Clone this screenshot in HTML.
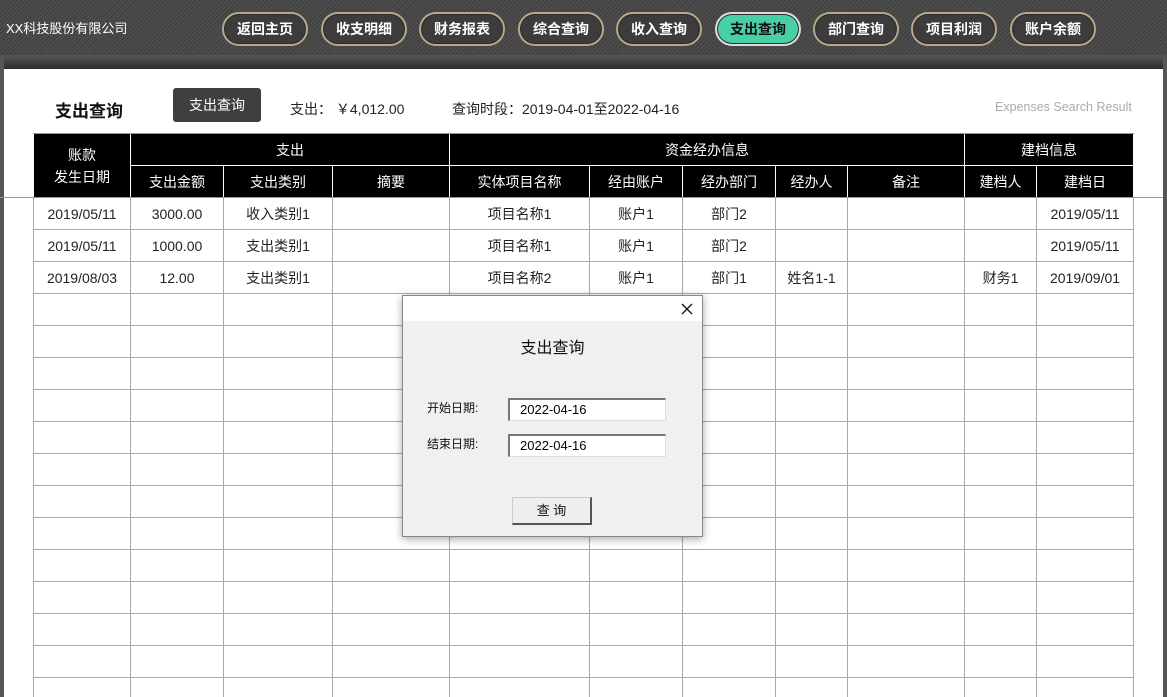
<!DOCTYPE html>
<html style="overflow:hidden;height:697px"><head><meta charset="utf-8"><style>
*{margin:0;padding:0;box-sizing:border-box}
body{width:1167px;height:697px;overflow:hidden;position:relative;background:#fff;font-family:"Liberation Sans","Noto Sans CJK SC",sans-serif;}
#hdr{position:absolute;left:0;top:0;width:1167px;height:55px;background:#454545;background-image:repeating-linear-gradient(135deg,#3d3d3d 0 1px,#4d4d4d 1px 3px);}
#band{position:absolute;left:0;top:55px;width:1167px;height:14px;background:linear-gradient(#555,#2e2e2e);}
#lb{position:absolute;left:0;top:55px;width:4px;height:642px;background:#555}
#rb{position:absolute;left:1163px;top:55px;width:4px;height:642px;background:#555}
.logo{position:absolute;left:6px;top:18px;color:#fff;font-size:13px}
.nb{position:absolute;top:12px;width:86px;height:34px;border-radius:17px;background:#3c3c3c;border:2px solid #b8a888;color:#fff;font-size:14px;font-weight:bold;text-align:center;line-height:30px;box-shadow:inset 0 0 0 1px #2a2a2a}
.nb.act{background:#48cfa6;color:#111;border-color:#ddd}
.t{position:absolute;font-size:14px;color:#222}
#wrap{position:absolute;left:0;top:0;width:1167px;height:697px;overflow:hidden}
table{position:absolute;left:33px;top:133px;border-collapse:collapse;table-layout:fixed;width:1100px}
td,th{height:32px;text-align:center;font-size:14px;color:#222;font-weight:normal;border:1px solid #aaa;padding:0}
th{background:#000;color:#fff;border:1px solid #fff}
.gl{position:absolute;height:1px;background:#2ecc8f;z-index:2}
#dlg{position:absolute;left:402px;top:295px;width:301px;height:242px;background:#f0f0f0;border:1px solid #888;box-shadow:0 2px 8px rgba(0,0,0,.35);z-index:3}
#dlg .tb{height:25px;background:#fff}
.in{position:absolute;left:105px;width:158px;height:23px;background:#fff;border:1px solid #ddd;border-top:2px solid #777;border-left:2px solid #777;font-size:13px;padding-left:10px;line-height:20px;color:#000}
</style></head><body><div id="wrap">
<div id="hdr"></div>
<div class="logo">XX科技股份有限公司</div>
<div class="nb" style="left:222px">返回主页</div>
<div class="nb" style="left:321px">收支明细</div>
<div class="nb" style="left:419px">财务报表</div>
<div class="nb" style="left:518px">综合查询</div>
<div class="nb" style="left:616px">收入查询</div>
<div class="nb act" style="left:715px">支出查询</div>
<div class="nb" style="left:813px">部门查询</div>
<div class="nb" style="left:911px">项目利润</div>
<div class="nb" style="left:1010px">账户余额</div>
<div id="band"></div><div id="lb"></div><div id="rb"></div>
<div class="t" style="left:55px;top:97px;font-size:17px;font-weight:bold;color:#111">支出查询</div>
<div style="position:absolute;left:173px;top:88px;width:88px;height:34px;background:#3f3f3f;border-radius:3px;color:#fff;font-size:14px;text-align:center;line-height:34px">支出查询</div>
<div class="t" style="left:290px;top:99px">支出：&nbsp;￥4,012.00</div>
<div class="t" style="left:452px;top:99px">查询时段：2019-04-01至2022-04-16</div>
<div class="t" style="left:995px;top:100px;color:#aaa;font-size:12.5px">Expenses Search Result</div>
<table>
<colgroup><col style="width:97px"><col style="width:93px"><col style="width:109px"><col style="width:117px"><col style="width:140px"><col style="width:93px"><col style="width:93px"><col style="width:72px"><col style="width:117px"><col style="width:72px"><col style="width:97px"></colgroup>
<tr><th rowspan="2" style="line-height:22px">账款<br>发生日期</th><th colspan="3">支出</th><th colspan="5">资金经办信息</th><th colspan="2">建档信息</th></tr>
<tr><th>支出金额</th><th>支出类别</th><th>摘要</th><th>实体项目名称</th><th>经由账户</th><th>经办部门</th><th>经办人</th><th>备注</th><th>建档人</th><th>建档日</th></tr>
<tr><td>2019/05/11</td><td>3000.00</td><td>收入类别1</td><td></td><td>项目名称1</td><td>账户1</td><td>部门2</td><td></td><td></td><td></td><td>2019/05/11</td></tr>
<tr><td>2019/05/11</td><td>1000.00</td><td>支出类别1</td><td></td><td>项目名称1</td><td>账户1</td><td>部门2</td><td></td><td></td><td></td><td>2019/05/11</td></tr>
<tr><td>2019/08/03</td><td>12.00</td><td>支出类别1</td><td></td><td>项目名称2</td><td>账户1</td><td>部门1</td><td>姓名1-1</td><td></td><td>财务1</td><td>2019/09/01</td></tr>
<tr><td></td><td></td><td></td><td></td><td></td><td></td><td></td><td></td><td></td><td></td><td></td></tr>
<tr><td></td><td></td><td></td><td></td><td></td><td></td><td></td><td></td><td></td><td></td><td></td></tr>
<tr><td></td><td></td><td></td><td></td><td></td><td></td><td></td><td></td><td></td><td></td><td></td></tr>
<tr><td></td><td></td><td></td><td></td><td></td><td></td><td></td><td></td><td></td><td></td><td></td></tr>
<tr><td></td><td></td><td></td><td></td><td></td><td></td><td></td><td></td><td></td><td></td><td></td></tr>
<tr><td></td><td></td><td></td><td></td><td></td><td></td><td></td><td></td><td></td><td></td><td></td></tr>
<tr><td></td><td></td><td></td><td></td><td></td><td></td><td></td><td></td><td></td><td></td><td></td></tr>
<tr><td></td><td></td><td></td><td></td><td></td><td></td><td></td><td></td><td></td><td></td><td></td></tr>
<tr><td></td><td></td><td></td><td></td><td></td><td></td><td></td><td></td><td></td><td></td><td></td></tr>
<tr><td></td><td></td><td></td><td></td><td></td><td></td><td></td><td></td><td></td><td></td><td></td></tr>
<tr><td></td><td></td><td></td><td></td><td></td><td></td><td></td><td></td><td></td><td></td><td></td></tr>
<tr><td></td><td></td><td></td><td></td><td></td><td></td><td></td><td></td><td></td><td></td><td></td></tr>
<tr><td></td><td></td><td></td><td></td><td></td><td></td><td></td><td></td><td></td><td></td><td></td></tr>
</table>
<div class="gl" style="left:33px;top:133px;width:1101px"></div>
<div class="gl" style="left:0;top:197px;width:1163px"></div>
<div id="dlg">
<div class="tb"></div>
<svg style="position:absolute;left:278px;top:7px" width="12" height="12"><path d="M1 1L11 11M11 1L1 11" stroke="#111" stroke-width="1.3"/></svg>
<div style="position:absolute;left:0;width:299px;top:38px;text-align:center;font-size:16px;color:#111">支出查询</div>
<div style="position:absolute;left:24px;top:103px;font-size:12px;color:#111">开始日期:</div>
<div class="in" style="top:102px">2022-04-16</div>
<div style="position:absolute;left:24px;top:139px;font-size:12px;color:#111">结束日期:</div>
<div class="in" style="top:138px">2022-04-16</div>
<div style="position:absolute;left:109px;top:201px;width:80px;height:28px;background:#eee;border:1px solid #ccc;border-right:2px solid #555;border-bottom:2px solid #555;font-size:13px;text-align:center;line-height:25px;color:#111">查 询</div>
</div>
</div></body></html>
